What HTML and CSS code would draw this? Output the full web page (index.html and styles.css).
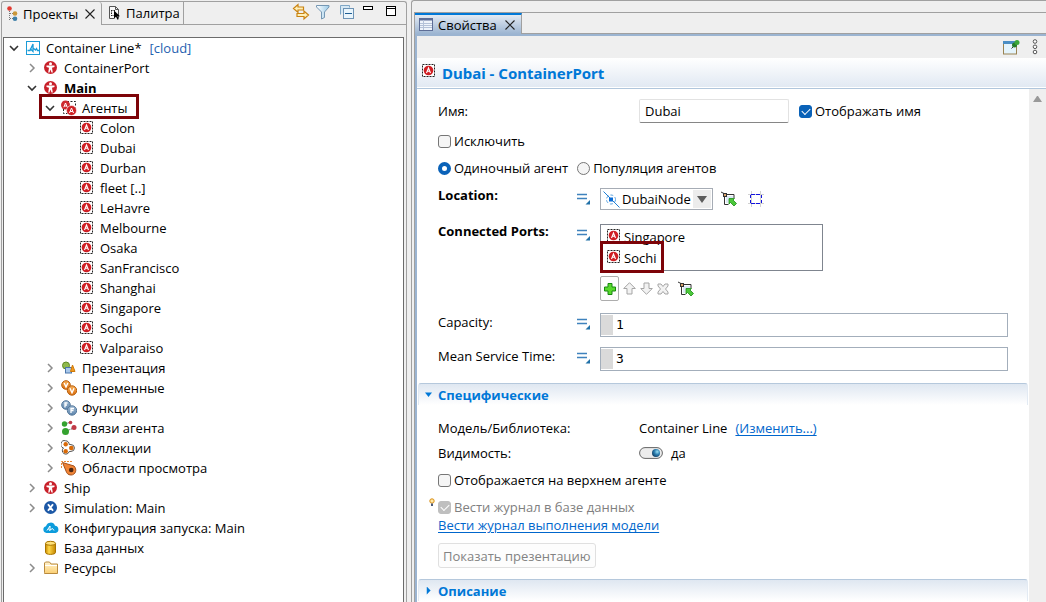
FILE: index.html
```html
<!DOCTYPE html>
<html lang="ru">
<head>
<meta charset="utf-8">
<title>Container Line</title>
<link rel="stylesheet" href="styles.css">
</head>
<body>
<svg class="defs" aria-hidden="true">
  <defs>
    <linearGradient id="gOrange" x1="0" y1="0" x2="0" y2="1"><stop offset="0" stop-color="#f9b25c"/><stop offset="1" stop-color="#d96a08"/></linearGradient>
    <linearGradient id="gGold" x1="0" y1="0" x2="1" y2="0"><stop offset="0" stop-color="#c98a00"/><stop offset=".35" stop-color="#ffd84a"/><stop offset="1" stop-color="#c48600"/></linearGradient>
    <linearGradient id="gFolder" x1="0" y1="0" x2="0" y2="1"><stop offset="0" stop-color="#fff3cf"/><stop offset="1" stop-color="#fbcf72"/></linearGradient>
    <linearGradient id="gBlue" x1="0" y1="0" x2="0" y2="1"><stop offset="0" stop-color="#9db8d2"/><stop offset="1" stop-color="#5f86ad"/></linearGradient>
    <linearGradient id="gFunnel" x1="0" y1="0" x2="1" y2="0"><stop offset="0" stop-color="#fff"/><stop offset="1" stop-color="#9ccbe8"/></linearGradient>
    <radialGradient id="gKnob" cx=".65" cy=".35" r=".7"><stop offset="0" stop-color="#9be0f5"/><stop offset=".5" stop-color="#2d7fb0"/><stop offset="1" stop-color="#12436b"/></radialGradient>
  </defs>
  <symbol id="open" viewBox="0 0 12 12"><path d="M2 4l4 4 4-4" fill="none" stroke="#333" stroke-width="1.6"/></symbol>
  <symbol id="closed" viewBox="0 0 12 12"><path d="M4 2l4 4-4 4" fill="none" stroke="#8c8c8c" stroke-width="1.5"/></symbol>
  <symbol id="cross" viewBox="0 0 10 10"><path d="M.5 .5l9 9M9.500 .5l-9 9" fill="none" stroke="#222" stroke-width="1.100"/></symbol>
  <symbol id="model" viewBox="0 0 16 16"><rect x="1.500" y="1.500" width="13" height="13" fill="#fff" stroke="#1b9cd8"/><path d="M2.500 10.500H5L8 4v7.500L5 8.500M8 8l2.500 2 1-1.500 1 2h1.500" fill="none" stroke="#1b9cd8" stroke-width="1.300"/></symbol>
  <symbol id="agentType" viewBox="0 0 16 16"><circle cx="7.500" cy="7.500" r="6.500" fill="#c8202a"/><circle cx="7.500" cy="3.700" r="1.500" fill="#fff"/><path d="M3.500 5.500h8v1.500l-2.500.7.8 4.800h-1.300l-1-3-1 3H5.200L6 7.700 3.500 7z" fill="#fff"/></symbol>
  <symbol id="agent" viewBox="0 0 16 16"><rect x="1.500" y="1.500" width="12" height="12" fill="#fff" stroke="#222" stroke-dasharray="2 1"/><circle cx="7.500" cy="7.500" r="4.800" fill="#cf1f24"/><path d="M5.500 10l2-5 2 5M6.300 8.300h2.400" fill="none" stroke="#fff" stroke-width="1.100"/></symbol>
  <symbol id="agents" viewBox="0 0 16 16"><rect x="2.500" y="1.500" width="12" height="12" fill="none" stroke="#222" stroke-dasharray="2 1.500"/><circle cx="4.500" cy="5" r="4.500" fill="#cf2b30"/><circle cx="10.500" cy="10.500" r="5" fill="#cf1f24" stroke="#fff" stroke-width=".6"/><path d="M2.800 7.200L4.500 3l1.700 4.200M3.400 6h2.200M8.500 13l2-5 2 5M9.200 11.500h2.600" fill="none" stroke="#fff"/></symbol>
  <symbol id="shapes" viewBox="0 0 16 16"><circle cx="5" cy="5.500" r="3.500" fill="#8fb94b" stroke="#5f8a24"/><rect x="4.500" y="7.500" width="6" height="5.500" fill="#a9c8ea" stroke="#4a76ac"/><path d="M11.500 5l2.500 6.500H9.500z" fill="#f29a1f" stroke="#d07a08"/></symbol>
  <symbol id="vars" viewBox="0 0 16 16"><circle cx="5" cy="5" r="4.300" fill="url(#gOrange)" stroke="#b85e0a"/><circle cx="11" cy="10.500" r="4.700" fill="url(#gOrange)" stroke="#b85e0a"/><path d="M3.200 3L5 7l1.800-4M9 8.200l2 4.500 2-4.500" fill="none" stroke="#fff" stroke-width="1.400"/></symbol>
  <symbol id="funcs" viewBox="0 0 16 16"><circle cx="5" cy="5" r="4.300" fill="url(#gBlue)" stroke="#55789b"/><circle cx="11" cy="10.500" r="4.700" fill="url(#gBlue)" stroke="#55789b"/><path d="M6.500 3H4v4.500M4 5h2M13 8.500h-3v4.500M10 10.500h2.500" fill="none" stroke="#fff" stroke-width="1.300"/></symbol>
  <symbol id="links" viewBox="0 0 16 16"><path d="M4 4l6-2M5 11l8-3" stroke="#555" stroke-dasharray="1.500 1"/><circle cx="3.500" cy="4" r="2.700" fill="#34a22f"/><circle cx="4.500" cy="11.500" r="3.500" fill="#34a22f"/><circle cx="9.500" cy="2.500" r="1.800" fill="#c03a46"/><circle cx="13" cy="7.500" r="2.500" fill="#c03a46"/></symbol>
  <symbol id="coll" viewBox="0 0 16 16"><path d="M4.700 .8A3.500 3.500 0 0 1 8.200 4.500L10 4.600a3.400 3.400 0 1 1 0 6.800L8.200 11.500A3.500 3.500 0 1 1 2.500 8 3.700 3.700 0 0 1 4.700 .8z" fill="#fff" stroke="#555"/><circle cx="4.700" cy="4.300" r="2.200" fill="#d96a08"/><circle cx="4.700" cy="11.300" r="2.200" fill="#d96a08"/><circle cx="10.300" cy="8" r="2.300" fill="#d96a08"/></symbol>
  <symbol id="view" viewBox="0 0 16 16"><path d="M.5 8V1.500H12" fill="none" stroke="#ef8a35" stroke-dasharray="2 1"/><path d="M1.500 2.500L13 6c3.500 3.500 1.500 9-3 9-3 0-4.500-2-5-4z" fill="#f08436" stroke="#a4501a"/><circle cx="10.200" cy="10" r="2.300" fill="#4a2714"/></symbol>
  <symbol id="sim" viewBox="0 0 16 16"><circle cx="7.500" cy="7.500" r="6.500" fill="#1c58a6"/><path d="M5 4.200l5 6.600M10 4.200l-5 6.600" stroke="#fff" stroke-width="1.900"/></symbol>
  <symbol id="cloud" viewBox="0 0 16 16"><path d="M3.500 13A3.400 3.400 0 0 1 3 6.300 4.700 4.700 0 0 1 12 5.700 3.700 3.700 0 0 1 12.500 13z" fill="#0c9cdc"/><path d="M4 10.500l3-4.500v4.500l-1.500-1M7 10l2.500-1.500 1.500 2" fill="none" stroke="#fff"/></symbol>
  <symbol id="db" viewBox="0 0 16 16"><path d="M2.500 3.500v9c0 2.500 10 2.500 10 0v-9z" fill="url(#gGold)" stroke="#a87400"/><ellipse cx="7.500" cy="3.300" rx="5" ry="2" fill="#ffe17a" stroke="#a87400"/></symbol>
  <symbol id="folder" viewBox="0 0 16 16"><path d="M1.500 12.500v-9.500l1-1h4l1.500 2h6.500v9.500h-13z" fill="url(#gFolder)" stroke="#b98a3e"/><path d="M2 5.500h12" stroke="#fff"/></symbol>
  <symbol id="projects" viewBox="0 0 16 16"><path d="M2.500 3v11M3 7.500h3M3 12.500h3" fill="none" stroke="#777" stroke-dasharray="1 1"/><circle cx="2.500" cy="2.500" r="2.300" fill="#e23a32"/><circle cx="8" cy="7.500" r="2.300" fill="#c9973a"/><circle cx="8" cy="12.700" r="2.300" fill="#3d7fa8"/></symbol>
  <symbol id="palette" viewBox="0 0 16 16"><path d="M1.500 13.500V1.500h6l3 3V13M7.500 1.500v3h3M1.500 13.500h5" fill="#f8f8f8" stroke="#555"/><path d="M3 5.500h5M3.500 5v6M3 10.500h4" stroke="#222" stroke-dasharray="1.500 1"/><path d="M6 5.500v8l2-1.800 1.500 3 1.300-.7-1.400-2.800H12z" fill="#000"/></symbol>
  <symbol id="sync" viewBox="0 0 18 18"><path d="M1.500 5.500L6 1.500v2.500h5.500v3H6v2.500zM16.500 12L12 8v2.500H5v3h7V16z" fill="#fff0b8" stroke="#c98312" stroke-width="1.200"/></symbol>
  <symbol id="funnel" viewBox="0 0 16 16"><path d="M1.500 1.500h12.500v1.500L9.500 8v5.500l-3 1.500V8l-5-5z" fill="url(#gFunnel)" stroke="#7597b3"/></symbol>
  <symbol id="collapse" viewBox="0 0 16 16"><path d="M1.500 10.500v-9h9v2" fill="#d7e9f5" stroke="#7fa7c6"/><rect x="4.500" y="4.500" width="10" height="10" fill="#e9f5fc" stroke="#6d93b5"/><path d="M6 9.500h7" stroke="#1f5f95"/></symbol>
  <symbol id="minimize" viewBox="0 0 12 12"><rect x="1.500" y="1.500" width="9" height="3" fill="#fff" stroke="#000"/></symbol>
  <symbol id="maximize" viewBox="0 0 12 12"><rect x="1.500" y="1.500" width="9" height="9" fill="#fff" stroke="#000"/><path d="M1 3.500h10" stroke="#000"/></symbol>
  <symbol id="table" viewBox="0 0 14 14"><rect x=".5" y=".5" width="13" height="12" fill="#eef4fb" stroke="#5d6d96"/><path d="M0 1.500h14" stroke="#5d6d96" stroke-width="2"/><path d="M4.500 2v10M1 5.500h12M1 7.500h12M1 9.500h12" stroke="#b4c2d8"/></symbol>
  <symbol id="pin" viewBox="0 0 17 16"><rect x=".5" y="2.500" width="13" height="12" fill="#e4f4fc" stroke="#9a8352"/><path d="M0 3h14" stroke="#4b8ec4" stroke-width="3"/><path d="M8.500 9l3-3" stroke="#333"/><circle cx="11.500" cy="5.500" r="2.500" fill="#257c2a"/><circle cx="14" cy="3" r="2.500" fill="#3ca63a"/></symbol>
  <symbol id="dots" viewBox="0 0 6 16"><g fill="#fff" stroke="#555"><circle cx="3" cy="2.500" r="1.800"/><circle cx="3" cy="7.800" r="1.800"/><circle cx="3" cy="13" r="1.800"/></g></symbol>
  <symbol id="static" viewBox="0 0 14 13"><path d="M1 2.500h10M1 6.500h10" stroke="#3f82bd" stroke-width="1.500"/><path d="M14 8v4.500H9.500z" fill="#2171a8"/></symbol>
  <symbol id="node" viewBox="0 0 17 17"><circle cx="8" cy="8.500" r="4.500" fill="none" stroke="#5aa2e0" stroke-dasharray="3 2"/><path d="M.5 .5l16 16" stroke="#1f7fd6"/><rect x="6" y="6.500" width="4" height="4" fill="#0a6cd6"/></symbol>
  <symbol id="pick" viewBox="0 0 16 16"><path d="M0 1l4 2M3.500 3v10.500h4M4 3.500h9V7" fill="none" stroke="#333"/><path d="M5 5h7v2H8l-1 5H5z" fill="#dce9f6"/><rect x="2.500" y="2.500" width="3" height="3" fill="#d9a36a" stroke="#333"/><path d="M8 7.500h5.500L12 9l3.500 3.500-2.500 2.500-3.500-3.500L8 13z" fill="#4cc83a" stroke="#1c8c16" stroke-width=".8"/></symbol>
  <symbol id="frame" viewBox="0 0 16 16"><path d="M3.500 0v16M12.500 0v16M0 3.500h16M0 12.500h16" stroke="#d0d0d0"/><path d="M3 3.500h10M3 12.500h10" fill="none" stroke="#1212e0" stroke-dasharray="4 1"/><path d="M2.500 4v9M13.500 4v9" fill="none" stroke="#1212e0" stroke-dasharray="3 2"/></symbol>
  <symbol id="plus" viewBox="0 0 12 12"><path d="M4 .5h4V4h3.500v4H8v3.500H4V8H.5V4H4z" fill="#58d82c" stroke="#16880f"/></symbol>
  <symbol id="up" viewBox="0 0 13 13"><path d="M6.500 .7L12.300 6.500H9v5.500H4V6.500H.7z" fill="#f2f2f2" stroke="#a5a5a5"/></symbol>
  <symbol id="down" viewBox="0 0 13 13"><path d="M6.500 12.300L12.300 6.500H9V1H4v5.500H.7z" fill="#f2f2f2" stroke="#a5a5a5"/></symbol>
  <symbol id="del" viewBox="0 0 12 12"><path d="M1 1h3l2 2.500L8 1h3v2L8.500 6 11 9v2H8L6 8.500 4 11H1V9l2.500-3L1 3z" fill="#f2f2f2" stroke="#a5a5a5"/></symbol>
  <symbol id="toggle" viewBox="0 0 24 12"><rect x=".6" y=".6" width="22.800" height="10.800" rx="5.400" fill="#ececec" stroke="#666"/><circle cx="17" cy="6" r="4" fill="url(#gKnob)"/></symbol>
  <symbol id="bulb" viewBox="0 0 6 9"><circle cx="3" cy="3" r="2.200" fill="#ffe9a8" stroke="#d98c14"/><path d="M2 5.500h2V8H2z" fill="#4a5a78"/></symbol>
</svg>

<section class="panel projects">
  <header class="tabs">
    <div class="tab tab-active"><svg class="i16"><use href="#projects"/></svg><span>Проекты</span><button class="icon-btn" aria-label="Закрыть"><svg class="i10"><use href="#cross"/></svg></button></div>
    <div class="tab-rest">
      <div class="tab tab-idle"><svg class="i16"><use href="#palette"/></svg><span>Палитра</span></div>
      <div class="tools">
        <button class="icon-btn" aria-label="Связать"><svg class="i18"><use href="#sync"/></svg></button>
        <button class="icon-btn" aria-label="Фильтр"><svg class="i16"><use href="#funnel"/></svg></button>
        <button class="icon-btn" aria-label="Свернуть все"><svg class="i16"><use href="#collapse"/></svg></button>
        <button class="icon-btn" aria-label="Свернуть"><svg class="i12"><use href="#minimize"/></svg></button>
        <button class="icon-btn" aria-label="Развернуть"><svg class="i12"><use href="#maximize"/></svg></button>
      </div>
    </div>
  </header>
  <nav class="tree" aria-label="Проекты">
    <ul>
      <li><div class="node"><svg class="i12"><use href="#open"/></svg><svg class="i16"><use href="#model"/></svg><span>Container Line*</span><span class="cloud">[cloud]</span></div>
        <ul>
          <li><div class="node"><svg class="i12"><use href="#closed"/></svg><svg class="i16"><use href="#agentType"/></svg><span>ContainerPort</span></div></li>
          <li><div class="node"><svg class="i12"><use href="#open"/></svg><svg class="i16"><use href="#agentType"/></svg><b>Main</b></div>
            <ul>
              <li><div class="node marked"><svg class="i12"><use href="#open"/></svg><svg class="i16"><use href="#agents"/></svg><span>Агенты</span></div>
                <ul>
                  <li><div class="node leaf"><svg class="i16"><use href="#agent"/></svg><span>Colon</span></div></li>
                  <li><div class="node leaf"><svg class="i16"><use href="#agent"/></svg><span>Dubai</span></div></li>
                  <li><div class="node leaf"><svg class="i16"><use href="#agent"/></svg><span>Durban</span></div></li>
                  <li><div class="node leaf"><svg class="i16"><use href="#agent"/></svg><span>fleet [..]</span></div></li>
                  <li><div class="node leaf"><svg class="i16"><use href="#agent"/></svg><span>LeHavre</span></div></li>
                  <li><div class="node leaf"><svg class="i16"><use href="#agent"/></svg><span>Melbourne</span></div></li>
                  <li><div class="node leaf"><svg class="i16"><use href="#agent"/></svg><span>Osaka</span></div></li>
                  <li><div class="node leaf"><svg class="i16"><use href="#agent"/></svg><span>SanFrancisco</span></div></li>
                  <li><div class="node leaf"><svg class="i16"><use href="#agent"/></svg><span>Shanghai</span></div></li>
                  <li><div class="node leaf"><svg class="i16"><use href="#agent"/></svg><span>Singapore</span></div></li>
                  <li><div class="node leaf"><svg class="i16"><use href="#agent"/></svg><span>Sochi</span></div></li>
                  <li><div class="node leaf"><svg class="i16"><use href="#agent"/></svg><span>Valparaiso</span></div></li>
                </ul>
              </li>
              <li><div class="node"><svg class="i12"><use href="#closed"/></svg><svg class="i16"><use href="#shapes"/></svg><span>Презентация</span></div></li>
              <li><div class="node"><svg class="i12"><use href="#closed"/></svg><svg class="i16"><use href="#vars"/></svg><span>Переменные</span></div></li>
              <li><div class="node"><svg class="i12"><use href="#closed"/></svg><svg class="i16"><use href="#funcs"/></svg><span>Функции</span></div></li>
              <li><div class="node"><svg class="i12"><use href="#closed"/></svg><svg class="i16"><use href="#links"/></svg><span>Связи агента</span></div></li>
              <li><div class="node"><svg class="i12"><use href="#closed"/></svg><svg class="i16"><use href="#coll"/></svg><span>Коллекции</span></div></li>
              <li><div class="node"><svg class="i12"><use href="#closed"/></svg><svg class="i16"><use href="#view"/></svg><span>Области просмотра</span></div></li>
            </ul>
          </li>
          <li><div class="node"><svg class="i12"><use href="#closed"/></svg><svg class="i16"><use href="#agentType"/></svg><span>Ship</span></div></li>
          <li><div class="node"><svg class="i12"><use href="#closed"/></svg><svg class="i16"><use href="#sim"/></svg><span>Simulation: Main</span></div></li>
          <li><div class="node leaf"><svg class="i16"><use href="#cloud"/></svg><span>Конфигурация запуска: Main</span></div></li>
          <li><div class="node leaf"><svg class="i16"><use href="#db"/></svg><span>База данных</span></div></li>
          <li><div class="node"><svg class="i12"><use href="#closed"/></svg><svg class="i16"><use href="#folder"/></svg><span>Ресурсы</span></div></li>
        </ul>
      </li>
    </ul>
  </nav>
</section>

<section class="panel details">
  <div class="folder">
    <header class="folder-tabs">
      <div class="folder-tab"><svg class="i14"><use href="#table"/></svg><span>Свойства</span><button class="icon-btn" aria-label="Закрыть"><svg class="i10"><use href="#cross"/></svg></button></div>
      <div class="folder-rest"></div>
    </header>
    <div class="sheet">
      <div class="sheet-tools">
        <button class="icon-btn" aria-label="Закрепить"><svg class="i17"><use href="#pin"/></svg></button>
        <button class="icon-btn" aria-label="Меню"><svg class="dots"><use href="#dots"/></svg></button>
      </div>
      <div class="title"><svg class="i16"><use href="#agent"/></svg><h1>Dubai - ContainerPort</h1></div>
      <div class="scroller">
        <form class="form">
          <div class="row row-wide name">
            <label for="name">Имя:</label>
            <div class="inline"><input class="text" id="name" type="text" value="Dubai"><label class="choice"><input type="checkbox" checked>Отображать имя</label></div>
          </div>
          <div class="row-line"><label class="choice"><input type="checkbox">Исключить</label></div>
          <div class="row-line radios"><label class="choice"><input type="radio" name="kind" checked>Одиночный агент</label><label class="choice"><input type="radio" name="kind">Популяция агентов</label></div>
          <div class="row location">
            <label for="loc"><b>Location:</b></label>
            <svg class="static"><use href="#static"/></svg>
            <div class="inline loc-tools">
              <span class="combo"><svg class="i17"><use href="#node"/></svg><select id="loc"><option>DubaiNode</option></select><span class="combo-arrow"></span></span>
              <button type="button" class="icon-btn" aria-label="Выбрать"><svg class="i16"><use href="#pick"/></svg></button>
              <button type="button" class="icon-btn" aria-label="Показать"><svg class="i16"><use href="#frame"/></svg></button>
            </div>
          </div>
          <div class="row ports">
            <b>Connected Ports:</b>
            <svg class="static"><use href="#static"/></svg>
            <div>
              <ul class="list">
                <li><svg class="i16"><use href="#agent"/></svg>Singapore</li>
                <li class="sochi"><svg class="i16"><use href="#agent"/></svg>Sochi</li>
              </ul>
              <div class="list-tools">
                <button type="button" class="add" aria-label="Добавить"><svg class="i12"><use href="#plus"/></svg></button>
                <button type="button" class="icon-btn" aria-label="Вверх"><svg class="i13"><use href="#up"/></svg></button>
                <button type="button" class="icon-btn" aria-label="Вниз"><svg class="i13"><use href="#down"/></svg></button>
                <button type="button" class="icon-btn" aria-label="Удалить"><svg class="i12"><use href="#del"/></svg></button>
                <button type="button" class="icon-btn pick" aria-label="Выбрать"><svg class="i16"><use href="#pick"/></svg></button>
              </div>
            </div>
          </div>
          <div class="row capacity"><label for="cap">Capacity:</label><svg class="static"><use href="#static"/></svg><input class="code" id="cap" type="text" value="1"></div>
          <div class="row service"><label for="mst">Mean Service Time:</label><svg class="static"><use href="#static"/></svg><input class="code" id="mst" type="text" value="3"></div>
          <h2 class="section"><span class="tri tri-down"></span>Специфические</h2>
          <div class="row row-wide model"><span>Модель/Библиотека:</span><div class="inline"><span>Container Line</span><a href="#model">(Изменить...)</a></div></div>
          <div class="row row-wide visible"><span>Видимость:</span><div class="inline"><svg class="toggle"><use href="#toggle"/></svg><span>да</span></div></div>
          <div class="row-line"><label class="choice"><input type="checkbox">Отображается на верхнем агенте</label></div>
          <div class="row-line log"><svg class="bulb"><use href="#bulb"/></svg><label class="choice off"><input type="checkbox" checked disabled>Вести журнал в базе данных</label></div>
          <div class="log-link"><a href="#log">Вести журнал выполнения модели</a></div>
          <button type="button" class="push" disabled>Показать презентацию</button>
          <h2 class="section last"><span class="tri tri-right"></span>Описание</h2>
        </form>
        <div class="scrollbar"><span class="scroll-up"></span></div>
      </div>
    </div>
  </div>
</section>
</body>
</html>
```

FILE: styles.css
```css
* { box-sizing: border-box; }
body {
  margin: 0; height: 100vh; overflow: hidden; display: flex; gap: 4px;
  background: #efefef; color: #000;
  font: 13px/18px "Open Sans", "Noto Sans", sans-serif;
}
ul { list-style: none; margin: 0; padding: 0; }
svg { display: block; flex: none; }
input, select, button { font: inherit; color: inherit; }
a { color: #0066cc; text-underline-offset: 2px; }
.defs { position: absolute; width: 0; height: 0; }
.i10 { width: 10px; height: 10px; }
.i12 { width: 12px; height: 12px; }
.i13 { width: 13px; height: 13px; }
.i14 { width: 14px; height: 14px; }
.i16 { width: 16px; height: 16px; }
.i17 { width: 17px; height: 17px; }
.i18 { width: 18px; height: 18px; }
.dots { width: 6px; height: 16px; }
.static { width: 14px; height: 13px; }
.toggle { width: 24px; height: 12px; }
.bulb { width: 6px; height: 9px; }
.icon-btn { border: 0; padding: 0; background: none; flex: none; }

.panel { border: 1px solid #a0a0a0; border-bottom: 0; display: flex; flex-direction: column; }
.projects { flex: 0 0 406px; margin: 1px 0 0 1px; border-radius: 3px 3px 0 0; }
.tabs { display: flex; height: 23px; }
.tab { display: flex; align-items: center; white-space: nowrap; }
.tab-active { width: 100px; padding: 0 6px 0 5px; border-right: 1px solid #a0a0a0; border-top-right-radius: 3px; }
.tab-active .icon-btn { margin-left: auto; }
.tab-rest { flex: 1; display: flex; justify-content: space-between; border-bottom: 1px solid #a0a0a0; }
.tab-idle { padding: 0 3px 0 6px; gap: 2px; border-right: 1px solid #a0a0a0; }
.tools { display: flex; gap: 7px; padding: 1px 9px 0 0; }
.tools .icon-btn:nth-child(1) { margin-right: -2px; }
.tools .icon-btn:nth-child(2) { margin-right: 1px; }
.tools .icon-btn:nth-child(4) { margin-right: 4px; }
.tools .icon-btn { display: flex; height: 18px; align-items: center; }
.tools .icon-btn:nth-child(n+4) { align-items: flex-start; padding-top: 2px; }
.tree { flex: 1; margin: 12px 2px 0 1px; background: #fff; border: 1px solid #6b6b6b; border-bottom: 0; }
.tree > ul { padding-left: 4px; }
.tree ul ul { padding-left: 18px; }
.node { display: flex; align-items: center; gap: 5px; height: 20px; width: max-content; }
.leaf { padding-left: 17px; }
.cloud { color: #1f5fb0; margin-left: 3px; }
.marked { position: relative; }
.marked::after { content: ""; position: absolute; inset: -4px -12px -1px -5px; border: 3px solid #7d0308; }

.details { flex: 1; min-width: 0; border-right: 0; border-radius: 3px 0 0 0; padding: 11px 0 0 2px; }
.folder { flex: 1; min-height: 0; display: flex; flex-direction: column; border: 1px solid #a0a0a0; border-width: 1px 0 0 1px; }
.folder-tabs { display: flex; height: 21px; }
.folder-tab { display: flex; align-items: center; gap: 5px; padding: 0 6px 0 4px; border-top: 2px solid #0078d7; border-right: 1px solid #a0a0a0; background: linear-gradient(#e3eaf3, #9bb4d1); }
.folder-tab .icon-btn { margin-left: 3px; }
.folder-rest { flex: 1; border-bottom: 1px solid #a0a0a0; }
.sheet { flex: 1; min-height: 0; display: flex; flex-direction: column; border: solid #9bb4d1; border-width: 2px 0 0 2px; }
.sheet-tools { display: flex; justify-content: flex-end; align-items: center; gap: 12px; height: 22px; padding-right: 8px; background: #efefef; }
.title { display: flex; align-items: center; gap: 5px; height: 31px; padding-left: 4px; background: linear-gradient(#fff, #e0e8f2); border-bottom: 1px solid #b0c6dc; box-shadow: inset 0 -1px #fff; }
.title .i16 { margin-bottom: 4px; }
.title h1 { margin: 0; font: bold 15px/20px "Noto Sans", sans-serif; color: #0078d7; }
.scroller { flex: 1; min-height: 0; display: flex; }
.scrollbar { width: 17px; background: #efefef; padding: 7px 4px; }
.scroll-up { display: block; border: 4px solid transparent; border-top: 0; border-bottom: 6px solid #999; }
.form { flex: 1; min-width: 0; background: #fff; overflow: hidden; }
.form > div, .push { margin-left: 21px; }
.row { display: grid; grid-template-columns: 138px 24px minmax(0, 1fr); margin-right: 21px; }
.row-wide { grid-template-columns: 201px minmax(0, 1fr); align-items: center; }
.inline { display: flex; align-items: center; }
.name { margin-top: 10px; }
.name .inline { gap: 10px; }
.text { width: 150px; height: 24px; padding: 0 5px; border: 1px solid #e2e2e2; border-bottom-color: #868686; border-radius: 2px; background: #fff; }
.choice { display: flex; align-items: center; gap: 3px; }
.off { color: #808080; }
.choice input {
  appearance: none; width: 13px; height: 13px; margin: 0;
  display: grid; place-items: center; border: 1px solid #767676; border-radius: 3px; background: #f5f5f5;
}
.choice input:checked { background: #0a62b8; border-color: #0a62b8; }
.choice input:checked::before { content: ""; width: 7px; height: 4px; border: solid #fff; border-width: 0 0 1px 1px; transform: rotate(-45deg); margin-bottom: 2px; }
.choice input:disabled { background: #bfbfbf; border-color: #bfbfbf; }
.choice input[type="radio"] { border-radius: 50%; }
.choice input[type="radio"]:checked { border-width: 4px; background: #fff; }
.choice input[type="radio"]:checked::before { content: none; }
.row-line { margin-top: 9px; display: flex; }
.radios { gap: 9px; }
.location { margin-top: 11px; }
.location .static { margin-top: 4px; }
.location > label, .ports > b { line-height: 15px; }
.loc-tools { gap: 11px; }
.loc-tools .combo { margin-right: -3px; }
.combo { position: relative; display: flex; align-items: center; width: 113px; height: 22px; padding-left: 2px; border: 1px solid #a6acb5; background: #fff; }
.combo select { appearance: none; flex: 1; min-width: 0; border: 0; background: none; padding: 0 0 0 2px; }
.combo-arrow { position: absolute; right: 1px; top: 1px; bottom: 1px; width: 18px; background: #ececec; pointer-events: none; }
.combo-arrow::before { content: ""; position: absolute; left: 4px; top: 6px; border: 5px solid transparent; border-top: 7px solid #5c5c5c; border-bottom: 0; }
.ports { margin-top: 14px; }
.ports .static { margin-top: 4px; }
.list { width: 223px; padding: 1px 5px 2px; border: 1px solid #7f858f; }
.list li { display: flex; align-items: center; gap: 2px; height: 21px; position: relative; width: max-content; }
.list .i16 { margin-bottom: 1px; }
.sochi::after { content: ""; position: absolute; inset: -6px -8px -5px -6px; border: 3px solid #7d0308; }
.list-tools { display: flex; align-items: center; gap: 4px; margin-top: 5px; }
.list-tools .pick { margin-left: 5px; }
.add { display: grid; place-items: center; width: 19px; height: 25px; padding: 0; border: 1px solid #adadad; border-radius: 2px; background: #fdfdfd; }
.capacity { margin-top: 12px; }
.service { margin-top: 10px; }
.capacity .static, .service .static { margin-top: 4px; }
.code { width: 100%; height: 24px; padding: 0 0 2px 15px; border: 1px solid #a3aebb; background: linear-gradient(#dadada, #dadada) 0 1px / 12px 20px no-repeat #fff; font-family: "DejaVu Sans Mono", monospace; }
.section { display: flex; align-items: center; gap: 6px; height: 22px; margin: 12px 1px 0 1px; padding-left: 6px; font-size: 13px; color: #0078d7; background: linear-gradient(#dfe7f1, #fff); border: 1px solid #b5c8dc; border-bottom: 0; border-radius: 3px 3px 0 0; border-left-color: #e2eaf3; border-right-color: #e2eaf3; }
.last { margin-top: 11px; }
.tri { width: 7px; height: 8px; background: #0078d7; }
.tri-down { clip-path: polygon(0 25%, 100% 25%, 50% 80%); }
.tri-right { clip-path: polygon(25% 0, 80% 50%, 25% 100%); }
.model { margin-top: 14px; }
.model .inline { gap: 8px; }
.visible { margin-top: 7px; }
.visible .inline { gap: 8px; }
.log { position: relative; }
.bulb { position: absolute; left: -9px; top: 0; }
.push { display: block; margin-top: 9px; height: 25px; padding: 0 4px; border: 1px solid #e0e0e0; border-radius: 3px; background: #fdfdfd; color: #838383; }
```
